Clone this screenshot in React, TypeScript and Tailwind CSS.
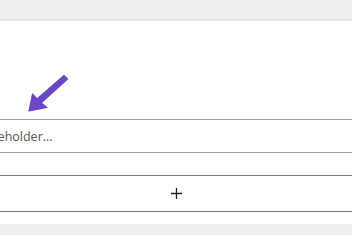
const App: React.FC = () => {
  return (
    <div
      className="w-[352px] h-[235px] bg-white overflow-hidden flex flex-col"
      style={{ fontFamily: '"Open Sans", "Noto Sans", sans-serif' }}
    >
      {/* top strip */}
      <div className="h-[21px] shrink-0 bg-[#eeeeee] border-b-2 border-[#e5e5e5]" />

      {/* annotation area */}
      <div className="h-[98px] shrink-0 pl-[26px] pt-[53px]">
        <svg width="44" height="40" viewBox="0 0 44 40" className="block">
          <path
            d="M3 37 L6.5 20 L11 25 L38 1.5 L41.5 5 L15 29 L21 33.5 Z"
            fill="#6d44c6"
            stroke="#6d44c6"
            strokeWidth="1.2"
            strokeLinejoin="round"
          />
        </svg>
      </div>

      <div className="-mx-[37px] flex flex-col">
        <input
          placeholder="Placeholder..."
          className="h-[34px] w-full border border-[#a3a3a3] px-[10px] text-[12.5px] text-[#555] placeholder-[#555] outline-none bg-white"
        />
        <button className="mt-[22px] h-[37px] w-full border border-[#7a7a7a] bg-white text-[#222] flex items-center justify-center">
          <svg width="11" height="11" viewBox="0 0 11 11" className="block">
            <path d="M5.5 0 V11 M0 5.5 H11" stroke="#222" strokeWidth="1.3" />
          </svg>
        </button>
      </div>

      <div className="mt-[12px] flex-1 bg-[#eeeeee]" />
    </div>
  );
};

export default App;
